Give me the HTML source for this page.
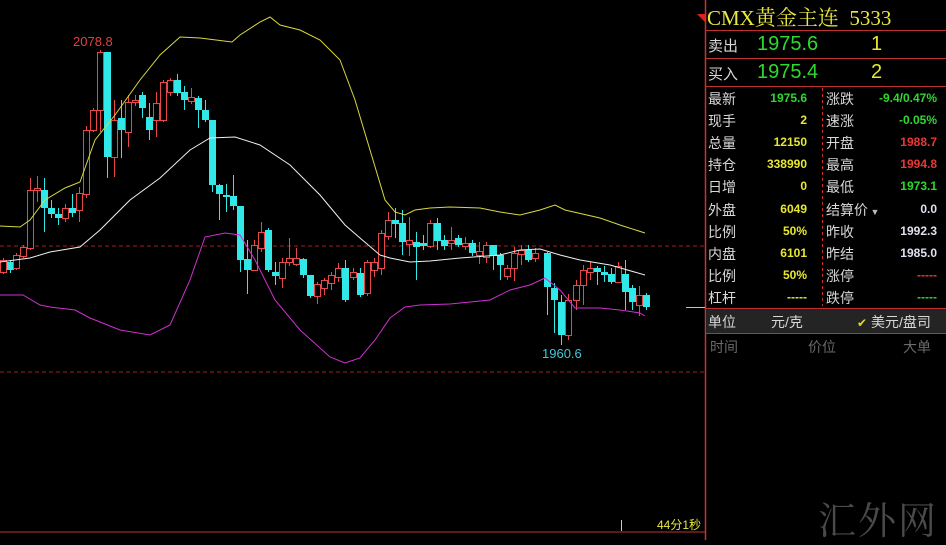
<!DOCTYPE html>
<html><head><meta charset="utf-8"><style>
body{margin:0;background:#000;width:946px;height:540px;overflow:hidden;position:relative;font-family:"Liberation Sans","Noto Sans CJK SC",sans-serif}
.t{position:absolute;white-space:nowrap}
.l{font-size:14px;color:#d8d8d8}
.v{font-size:12px;font-weight:bold;text-align:right}
.y{color:#e8e830}.g{color:#2ed82e}.r{color:#e83838}.w{color:#e0e0f0}
</style></head><body>
<svg id="c" width="946" height="540" style="position:absolute;left:0;top:0">
<line x1="0" y1="246" x2="705" y2="246" stroke="#a02020" stroke-dasharray="4,3"/>
<line x1="0" y1="372" x2="705" y2="372" stroke="#a02020" stroke-dasharray="4,3"/>
<line x1="0" y1="532" x2="705" y2="532" stroke="#c03030"/>
<line x1="705.5" y1="0" x2="705.5" y2="540" stroke="#d03030" stroke-width="1.5"/>
<line x1="686" y1="307.5" x2="705" y2="307.5" stroke="#d8d820"/>
<line x1="621.5" y1="520" x2="621.5" y2="531" stroke="#ccc"/>
<polygon points="697,14 705,14 705,22" fill="#e02020"/>
<g id="k"></g>
<polyline fill="none" stroke="#d8d840" stroke-width="1" points="0,226 20,227 30,220 45,200 65,188 80,182 95,140 115,115 140,80 160,55 180,37 200,38 232,42 240,35 260,22 270,17 280,25 300,30 320,40 340,60 355,100 370,150 385,200 395,212 405,215 415,210 430,208 450,207 480,208 500,212 520,215 540,210 555,205 565,210 600,218 620,225 645,233"/>
<polyline fill="none" stroke="#f0f0f0" stroke-width="1" points="0,262 30,258 50,252 80,247 100,230 130,200 160,178 190,150 210,138 235,137 260,145 290,165 320,195 345,225 360,238 380,255 390,258 410,262 430,261 460,258 500,255 520,250 540,249 560,255 580,260 610,265 645,275"/>
<polyline fill="none" stroke="#d030d0" stroke-width="1" points="0,295 23,295 40,305 50,307 75,310 90,318 120,330 150,335 170,325 190,280 205,237 225,233 240,235 255,260 275,300 300,330 330,357 345,363 360,358 375,340 390,318 405,307 420,305 450,304 490,300 510,290 530,285 545,278 560,290 575,308 600,308 620,310 640,313 645,316"/>
<text x="73" y="46" fill="#e04040" font-size="13" font-family="Liberation Sans">2078.8</text>
<text x="542" y="358" fill="#40c8d8" font-size="13" font-family="Liberation Sans">1960.6</text>
<line x1="706" y1="30.5" x2="946" y2="30.5" stroke="#c03030"/>
<line x1="706" y1="58.5" x2="946" y2="58.5" stroke="#c03030"/>
<line x1="706" y1="86.5" x2="946" y2="86.5" stroke="#c03030"/>
<line x1="822.5" y1="88" x2="822.5" y2="306" stroke="#c03030" stroke-dasharray="3,3"/>
<rect x="706" y="308" width="240" height="25" fill="#242424"/>
<line x1="706" y1="308.5" x2="946" y2="308.5" stroke="#c03030"/>
<line x1="706" y1="333.5" x2="946" y2="333.5" stroke="#c03030"/>
</svg>
<script>
var d=[[3,260,272,258,274,'r'],[10,262,270,260,273,'c'],[16,255,268,253,270,'r'],[23,247,256,245,258,'r'],[30,190,248,178,250,'r'],[37,188,190,176,202,'r'],[44,190,208,178,232,'c'],[51,208,214,200,218,'c'],[58,214,218,208,225,'c'],[65,208,218,204,222,'r'],[72,208,213,194,217,'c'],[79,193,210,187,222,'r'],[86,130,194,126,198,'r'],[93,110,130,108,132,'r'],[100,52,110,50,132,'r'],[107,52,157,52,178,'c'],[114,120,157,100,177,'r'],[121,118,130,100,158,'c'],[128,102,132,95,147,'r'],[135,100,102,95,106,'r'],[142,95,108,92,118,'c'],[149,117,130,103,140,'c'],[156,103,120,92,137,'r'],[163,82,120,80,122,'r'],[170,80,92,78,96,'r'],[177,80,93,74,96,'c'],[184,92,100,86,110,'c'],[191,97,101,88,104,'r'],[198,98,110,96,128,'c'],[205,110,120,100,122,'c'],[212,120,185,120,192,'c'],[219,185,194,184,220,'c'],[226,195,197,184,212,'c'],[233,196,206,175,210,'c'],[240,206,260,206,272,'c'],[247,259,270,240,294,'c'],[254,245,270,240,270,'r'],[261,232,248,222,252,'r'],[268,230,270,228,272,'c'],[275,272,276,262,285,'c'],[282,262,278,258,288,'r'],[289,258,262,238,266,'r'],[296,258,264,248,266,'r'],[303,259,275,258,278,'c'],[310,275,296,275,298,'c'],[317,284,296,282,304,'r'],[324,280,288,278,295,'r'],[331,275,283,272,290,'r'],[338,268,277,263,282,'r'],[345,268,300,260,302,'c'],[353,272,277,268,280,'r'],[360,273,295,268,297,'c'],[367,262,293,260,296,'r'],[374,262,270,258,277,'r'],[381,233,268,230,275,'r'],[388,220,236,212,240,'r'],[395,220,224,208,238,'c'],[402,223,242,210,255,'c'],[409,240,244,217,256,'r'],[416,242,247,232,280,'c'],[423,243,246,235,250,'c'],[430,223,246,220,248,'r'],[437,223,241,218,250,'c'],[444,240,246,235,250,'c'],[451,240,243,227,250,'r'],[458,238,245,235,247,'c'],[465,243,246,237,250,'r'],[472,243,253,240,256,'c'],[479,251,255,242,264,'r'],[486,245,257,242,263,'r'],[493,245,256,245,270,'c'],[500,255,265,253,280,'c'],[507,268,276,265,280,'r'],[514,253,268,247,281,'r'],[521,250,254,245,265,'r'],[528,250,260,245,262,'c'],[535,253,258,248,262,'r'],[547,253,287,252,315,'c'],[554,288,300,283,333,'c'],[561,302,335,295,345,'c'],[568,300,335,294,340,'r'],[576,285,300,280,310,'r'],[583,270,285,265,305,'r'],[590,268,272,262,280,'r'],[597,268,272,266,285,'c'],[604,272,275,266,282,'c'],[611,274,282,268,284,'c'],[618,266,282,262,283,'r'],[625,274,292,260,310,'c'],[632,288,302,285,310,'c'],[639,295,305,286,316,'r'],[646,295,307,293,310,'c']];
var s='';d.forEach(function(a){var x=a[0],col=a[5]=='r'?'#e84848':'#30e8e8';var h=Math.max(a[2]-a[1],1);
s+='<line x1="'+(x+.5)+'" y1="'+a[3]+'" x2="'+(x+.5)+'" y2="'+a[4]+'" stroke="'+col+'"/>';
if(a[5]=='r')s+='<rect x="'+(x-2.5)+'" y="'+(a[1]+.5)+'" width="6" height="'+h+'" fill="#000" stroke="'+col+'"/>';
else s+='<rect x="'+(x-3)+'" y="'+a[1]+'" width="7" height="'+h+'" fill="'+col+'"/>';});
document.getElementById('k').innerHTML=s;
</script>
<div class="t" style="left:707px;top:2px;font-size:21px;color:#e8e840;font-family:'Liberation Serif','Noto Serif CJK SC',serif">CMX黄金主连&nbsp;&nbsp;5333</div>
<div class="t l" style="left:708px;top:35px;font-size:15px">卖出</div>
<div class="t g" style="left:757px;top:33px;font-size:20px">1975.6</div>
<div class="t y" style="left:871px;top:33px;font-size:20px">1</div>
<div class="t l" style="left:708px;top:63px;font-size:15px">买入</div>
<div class="t g" style="left:757px;top:61px;font-size:20px">1975.4</div>
<div class="t y" style="left:871px;top:61px;font-size:20px">2</div>
<div id="tb"></div>
<script>
var rows=[['最新','1975.6','g','涨跌','-9.4/0.47%','g'],['现手','2','y','速涨','-0.05%','g'],['总量','12150','y','开盘','1988.7','r'],['持仓','338990','y','最高','1994.8','r'],['日增','0','y','最低','1973.1','g'],['外盘','6049','y','结算价','0.0','w'],['比例','50%','y','昨收','1992.3','w'],['内盘','6101','y','昨结','1985.0','w'],['比例','50%','y','涨停','-----','r'],['杠杆','-----','y','跌停','-----','g']];
var h='';rows.forEach(function(r,i){var t=89+i*22.1;
h+='<div class="t l" style="left:708px;top:'+t+'px">'+r[0]+'</div>';
h+='<div class="t v '+r[2]+'" style="right:139px;top:'+(t+2)+'px">'+r[1]+'</div>';
h+='<div class="t l" style="left:826px;top:'+t+'px">'+r[3]+(i==5?'<span style="font-size:9px;color:#bbb"> ▼</span>':'')+'</div>';
h+='<div class="t v '+r[5]+'" style="right:9px;top:'+(t+2)+'px">'+r[4]+'</div>';});
document.getElementById('tb').innerHTML=h;
</script>
<div class="t l" style="left:708px;top:312px">单位</div>
<div class="t l" style="left:771px;top:312px">元/克</div>
<div class="t l" style="left:857px;top:312px"><span style="color:#e8d820;font-size:12px">✔</span> 美元/盘司</div>
<div class="t" style="left:710px;top:337px;font-size:14px;color:#6a6a6a">时间</div>
<div class="t" style="left:808px;top:337px;font-size:14px;color:#6a6a6a">价位</div>
<div class="t" style="left:903px;top:337px;font-size:14px;color:#6a6a6a">大单</div>
<div class="t" style="left:657px;top:516px;font-size:12px;color:#e8e840">44分1秒</div>
<div class="t" style="left:818px;top:490px;font-size:38px;color:#4a4a4a;font-family:'Noto Serif CJK SC',serif;letter-spacing:2px">汇外网</div>
</body></html>
